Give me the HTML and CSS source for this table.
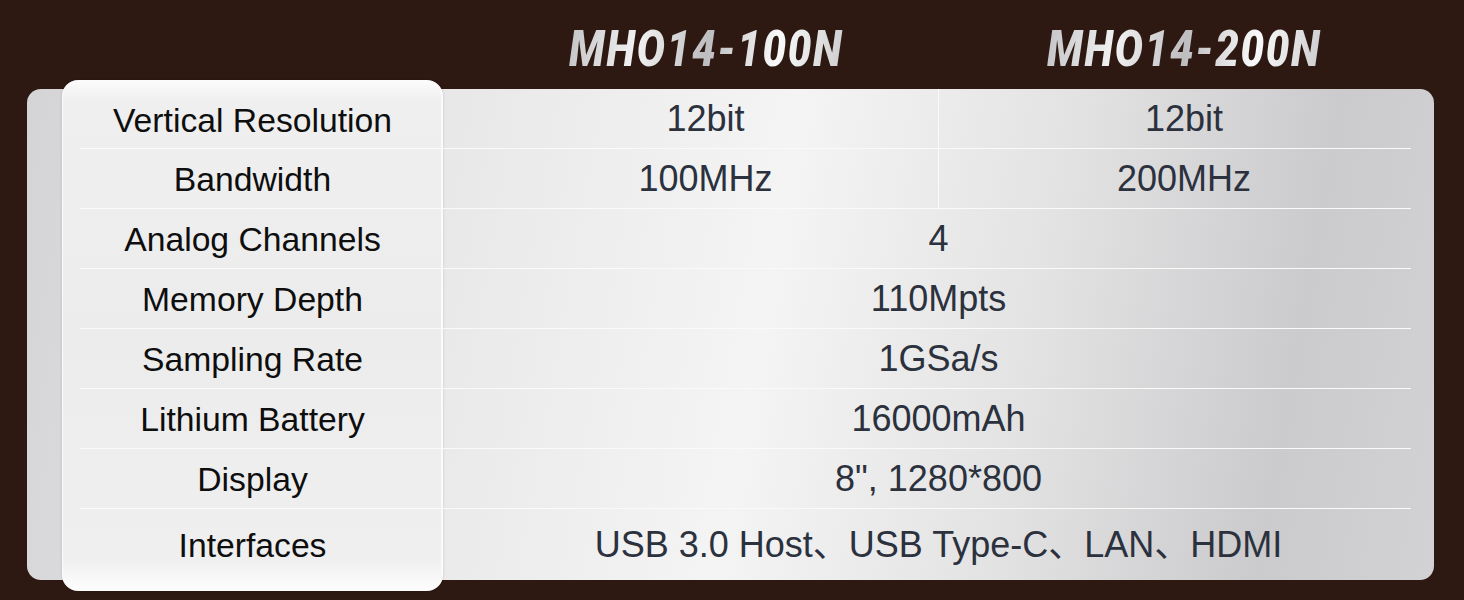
FILE: index.html
```html
<!DOCTYPE html>
<html lang="en">
<head>
<meta charset="utf-8">
<title>MHO14 Specifications</title>
<link rel="stylesheet" href="styles.css">
</head>
<body>
<div class="page">
  <div class="heads">
    <div class="model"><span class="mtext">MHO14-100N</span></div>
    <div class="model"><span class="mtext">MHO14-200N</span></div>
  </div>
  <div class="panel">
    <div class="labels">
      <div class="lrow">Vertical Resolution</div>
      <div class="lrow">Bandwidth</div>
      <div class="lrow">Analog Channels</div>
      <div class="lrow">Memory Depth</div>
      <div class="lrow">Sampling Rate</div>
      <div class="lrow">Lithium Battery</div>
      <div class="lrow">Display</div>
      <div class="lrow last">Interfaces</div>
    </div>
    <div class="values">
      <div class="vrow split">
        <div class="c1">12bit</div>
        <div class="c2">12bit</div>
      </div>
      <div class="vrow split">
        <div class="c1">100MHz</div>
        <div class="c2">200MHz</div>
      </div>
      <div class="vrow span">4</div>
      <div class="vrow span">110Mpts</div>
      <div class="vrow span">1GSa/s</div>
      <div class="vrow span">16000mAh</div>
      <div class="vrow span">8", 1280*800</div>
      <div class="vrow span last">USB 3.0 Host、USB Type-C、LAN、HDMI</div>
    </div>
  </div>
</div>
</body>
</html>
```

FILE: styles.css
```css
html, body {
  margin: 0;
  padding: 0;
}
body {
  background: #2d1812;
  width: 1464px;
  height: 600px;
  overflow: hidden;
  font-family: "Liberation Sans", Arial, "Noto Sans CJK SC", sans-serif;
}
.page {
  display: flex;
  flex-direction: column;
  padding: 0 30px 0 27px;
}
.heads {
  display: flex;
  height: 89px;
  padding-left: 440px;
}
.model {
  width: 478px;
  display: flex;
  justify-content: center;
  padding-top: 24px;
}
.mtext {
  display: inline-block;
  font-family: Roboto, "Liberation Sans", sans-serif;
  font-weight: 900;
  font-style: italic;
  font-size: 50px;
  line-height: 1;
  letter-spacing: 2px;
  transform: scaleX(0.84);
  color: #e6e6e6;
  background: linear-gradient(100deg, #c4c3c6 0%, #f2f2f2 25%, #bdbcbf 50%, #fafafa 75%, #cbcbcd 100%);
  -webkit-background-clip: text;
  background-clip: text;
  -webkit-text-fill-color: transparent;
}
.panel {
  display: flex;
  height: 491px;
  border-radius: 14px;
  padding-left: 35px;
  background: linear-gradient(100deg, #d4d3d5 0%, #e6e6e7 25%, #f4f4f4 52%, #e3e3e4 70%, #cbcacc 88%, #d2d1d3 100%);
}
.labels {
  box-sizing: border-box;
  width: 381px;
  margin: -9px 0 -11px;
  padding: 9px 0 9px 17px;
  border-radius: 16px;
  border: 2px solid #fbfbfb;
  border-left-width: 1px;
  border-top-width: 1px;
  background: linear-gradient(180deg, #fbfbfb 0px, #efefef 20px, #ececec 50%, #efefef calc(100% - 30px), #fdfdfd 100%);
  box-shadow: 0 0 3px rgba(0, 0, 0, 0.15);
  display: flex;
  flex-direction: column;
}
.lrow {
  height: 60px;
  box-sizing: border-box;
  border-top: 1px solid #fafafa;
  display: flex;
  align-items: center;
  justify-content: center;
  padding: 1px 16px 0 0;
  font-size: 33.7px;
  line-height: 36px;
  color: #0e0e0e;
}
.lrow:first-child {
  border-top: 0;
  height: 58px;
}
.lrow.last {
  flex: 1;
}
.values {
  flex: 1;
  display: flex;
  flex-direction: column;
  margin-right: 23px;
}
.vrow {
  height: 60px;
  box-sizing: border-box;
  border-top: 1px solid #fafafa;
  font-size: 36px;
  line-height: 38px;
  color: #2b313d;
}
.vrow:first-child {
  border-top: 0;
  height: 59px;
}
.vrow.last {
  flex: 1;
}
.span {
  display: flex;
  align-items: center;
  justify-content: center;
  padding: 0 0 0 23px;
}
.split {
  display: grid;
  grid-template-columns: 496px 1fr;
}
.split > div {
  display: flex;
  align-items: center;
  justify-content: center;
}
.split .c1 {
  border-right: 1px solid #fafafa;
  padding-left: 30px;
}
.split .c2 {
  padding-left: 18px;
}
```
